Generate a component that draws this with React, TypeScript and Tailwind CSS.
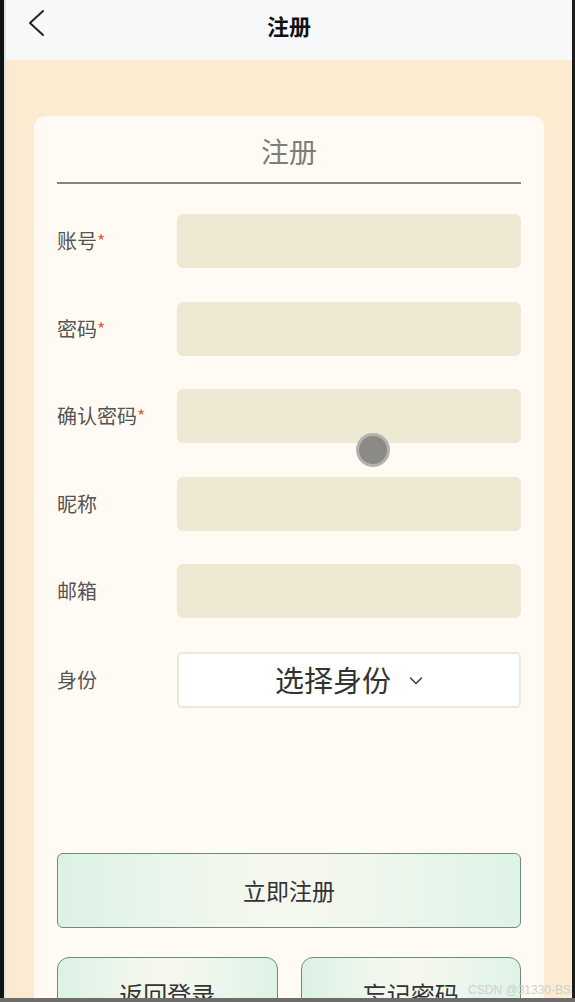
import { useState } from 'react';

const fields = [
  { label: '账号', required: true },
  { label: '密码', required: true },
  { label: '确认密码', required: true },
  { label: '昵称', required: false },
  { label: '邮箱', required: false },
];

const btnBg =
  'bg-[linear-gradient(90deg,#dcf2e5_0%,#eef6ec_30%,#f6f8f0_50%,#eef6ec_70%,#ddf3e6_100%)]';

const RegisterPage = () => {
  const [values, setValues] = useState<string[]>(fields.map(() => ''));

  const setValue = (i: number, v: string) => {
    const next = [...values];
    next[i] = v;
    setValues(next);
  };

  return (
    <div
      className="relative w-[575px] h-[1002px] overflow-hidden flex bg-[#fcebd0]"
      style={{ fontFamily: '"Noto Sans CJK SC", "Noto Sans", sans-serif' }}
    >
      <div className="w-[4px] bg-[#121212]" />
      <div className="w-[2px] bg-[#dfe4ea]" />

      <div className="flex-1 flex flex-col">
        {/* Header */}
        <div className="relative shrink-0 h-[60px] bg-[#f7f8fa] flex items-center justify-center">
          <button className="absolute left-[20px] top-[9px] p-0">
            <svg width="20" height="28" viewBox="0 0 20 28" fill="none">
              <path d="M17 2 L4 14 L17 26" stroke="#222" strokeWidth="2" strokeLinecap="round" strokeLinejoin="round" />
            </svg>
          </button>
          <h1 className="text-[22px] font-bold text-[#111] leading-none -mt-[11px]">注册</h1>
        </div>

        {/* Body */}
        <div className="shrink-0 px-[28px] pt-[56px]">
          <div className="rounded-[12px] bg-[#fffbf4] px-[23px] pt-[17px] pb-[40px]">
            <h2 className="text-center text-[28px] leading-[36px] text-[#7b7f78]">注册</h2>
            <div className="mt-[13px] h-[2px] bg-[#83867f]" />

            <div className="mt-[30px] flex flex-col gap-[33.5px]">
              {fields.map((f, i) => (
                <div key={f.label} className="flex items-center">
                  <label className="w-[120px] text-[20px] text-[#555] leading-none">
                    {f.label}
                    {f.required && <span className="text-[#e0614b] text-[18px] align-top">*</span>}
                  </label>
                  <input
                    value={values[i]}
                    onChange={(e) => setValue(i, e.target.value)}
                    type={f.label.includes('密码') ? 'password' : 'text'}
                    className="flex-1 h-[54px] rounded-[6px] bg-[#ede9d3] px-3 outline-none"
                  />
                </div>
              ))}

              {/* Identity select */}
              <div className="flex items-center">
                <label className="w-[120px] text-[20px] text-[#555] leading-none">身份</label>
                <button className="flex-1 h-[56px] rounded-[5px] bg-white border-2 border-[#ece9dc] flex items-center justify-center gap-[18px]">
                  <span className="text-[29px] text-[#333] leading-none">选择身份</span>
                  <svg width="14" height="10" viewBox="0 0 14 10" fill="none" className="mt-[2px]">
                    <path d="M1.5 2 L7 7.5 L12.5 2" stroke="#444" strokeWidth="1.6" strokeLinecap="round" strokeLinejoin="round" />
                  </svg>
                </button>
              </div>
            </div>

            {/* Actions */}
            <button
              className={`mt-[145px] w-full h-[75px] rounded-[6px] border-[1.5px] border-[#6e8a7b] ${btnBg} text-[23px] text-[#333]`}
            >
              立即注册
            </button>
            <div className="mt-[29px] flex gap-[23px]">
              <button
                className={`flex-1 h-[75px] rounded-[12px] border-[1.5px] border-[#6e8a7b] ${btnBg} text-[24px] text-[#333]`}
              >
                返回登录
              </button>
              <button
                className={`flex-1 h-[75px] rounded-[12px] border-[1.5px] border-[#6e8a7b] ${btnBg} text-[24px] text-[#333]`}
              >
                忘记密码
              </button>
            </div>
          </div>
        </div>
      </div>

      <div className="w-[3px] bg-[#1c1c1c]" />

      {/* touch indicator */}
      <div className="absolute left-[356px] top-[433px] w-[34px] h-[34px] rounded-full bg-[#8b8a86] border-[3px] border-[#b3b2ad]" />

      {/* watermark */}
      <div className="absolute right-[4px] bottom-[6px] text-[12px] text-[#cfcfcf] leading-none" style={{ fontFamily: '"Liberation Sans", sans-serif' }}>
        CSDN @31330-BS
      </div>

      {/* bottom bar */}
      <div className="absolute left-0 bottom-0 w-full h-[4px] bg-[#6d6d6d]" />
    </div>
  );
};

export default function App() {
  return <RegisterPage />;
}
